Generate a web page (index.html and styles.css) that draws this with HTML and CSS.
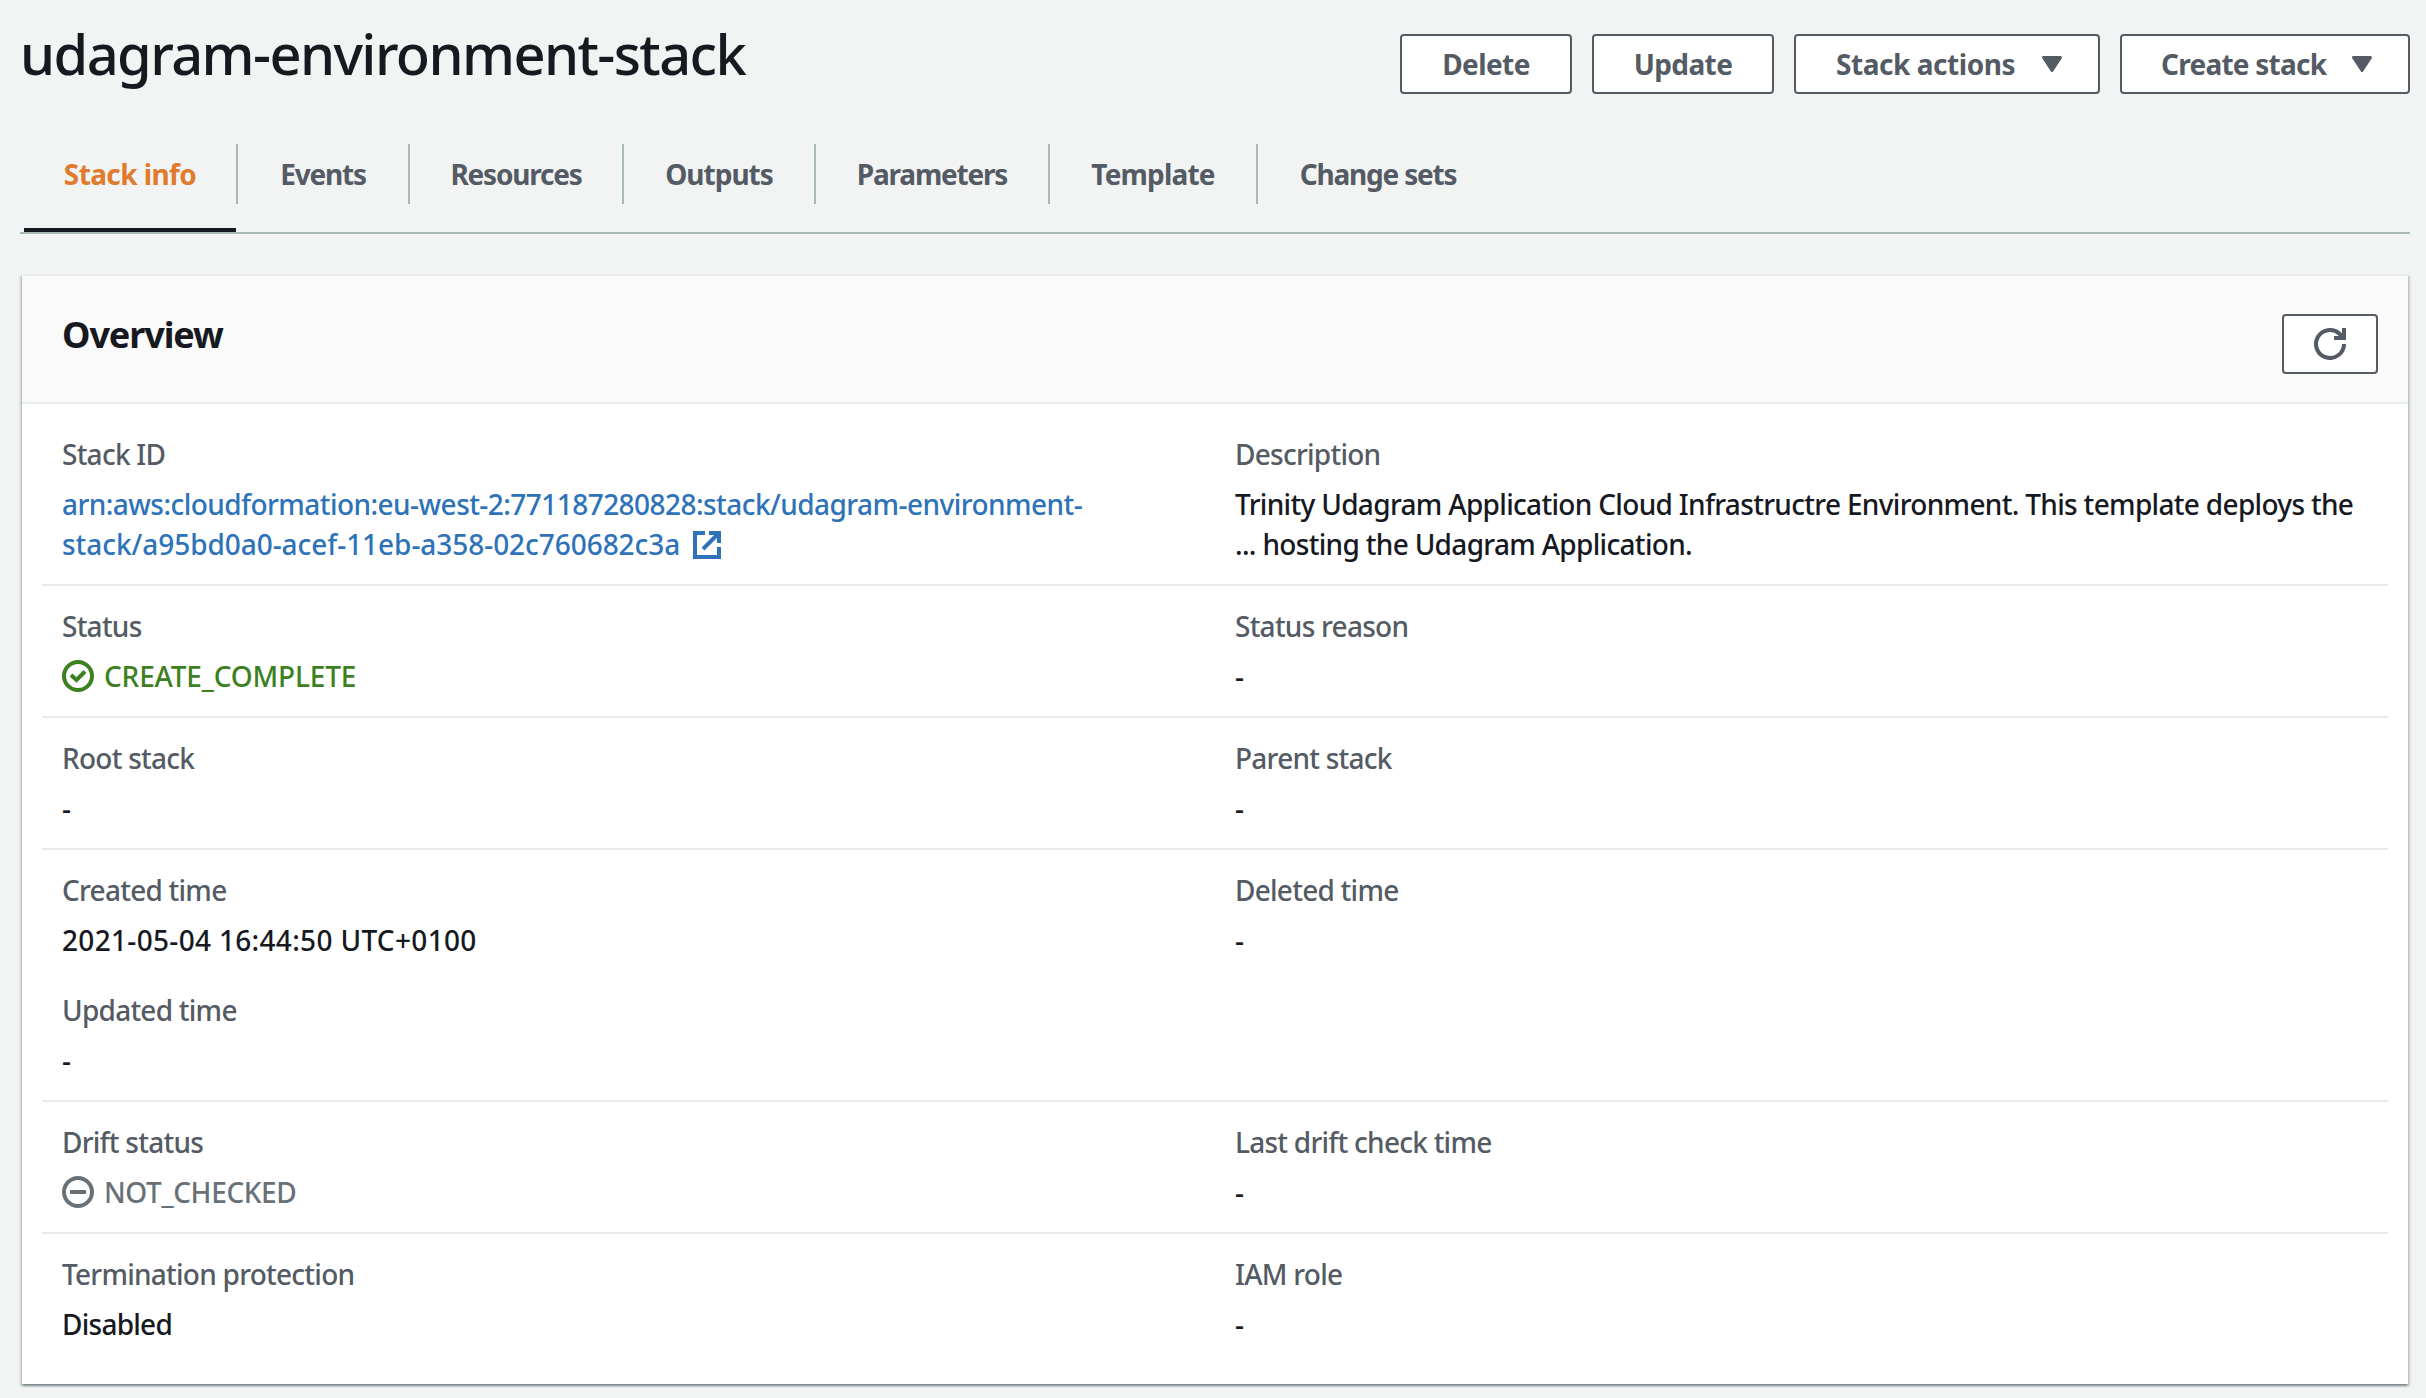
FILE: index.html
```html
<!DOCTYPE html>
<html lang="en">
<head>
<meta charset="utf-8">
<title>udagram-environment-stack</title>
<link rel="stylesheet" href="styles.css">
</head>
<body>
<header class="page-header">
  <h1 class="page-title"><span>udagram-environment-stack</span></h1>
  <div class="actions">
    <button class="button delete"><span>Delete</span></button>
    <button class="button update"><span>Update</span></button>
    <button class="button stack-actions"><span>Stack actions</span><svg class="caret" viewBox="0 0 20 16"><path d="M1.500 1.500h17L10 14.500z"/></svg></button>
    <button class="button create"><span>Create stack</span><svg class="caret" viewBox="0 0 20 16"><path d="M1.500 1.500h17L10 14.500z"/></svg></button>
  </div>
</header>
<nav class="tabs">
  <a class="tab tab-info active"><span>Stack info</span></a>
  <a class="tab tab-events"><span>Events</span></a>
  <a class="tab tab-resources"><span>Resources</span></a>
  <a class="tab tab-outputs"><span>Outputs</span></a>
  <a class="tab tab-parameters"><span>Parameters</span></a>
  <a class="tab tab-template"><span>Template</span></a>
  <a class="tab tab-changes"><span>Change sets</span></a>
</nav>
<main class="card">
  <div class="card-header">
    <h2 class="card-title"><span>Overview</span></h2>
    <button class="button refresh" aria-label="Refresh"><svg class="refresh-icon" viewBox="0 0 32 32"><path d="M30 16A14 14 0 1 1 25.500 5.700L29 10M30 0v10H20"/></svg></button>
  </div>
  <div class="card-body">
    <section class="row">
      <div class="cell"><div class="label"><span>Stack ID</span></div><div class="value"><a class="link"><span class="arn">arn:aws:cloudformation:eu-west-2:771187280828:stack/udagram-environment-</span><br><span class="arn-tail">stack/a95bd0a0-acef-11eb-a358-02c760682c3a</span><svg class="external" viewBox="0 0 28 28"><path d="M12 2H2v24h24V16M16 2h10v10M26 2L10 18"/></svg></a></div></div>
      <div class="cell"><div class="label"><span>Description</span></div><div class="value"><span class="desc">Trinity Udagram Application Cloud Infrastructre Environment. This template deploys the</span><br><span class="desc">... hosting the Udagram Application.</span></div></div>
    </section>
    <section class="row">
      <div class="cell"><div class="label"><span>Status</span></div><div class="value status success"><svg class="status-icon" viewBox="0 0 32 32"><circle cx="16" cy="16" r="14"/><path d="M9 15l5.500 5L23 11.500"/></svg><span>CREATE_COMPLETE</span></div></div>
      <div class="cell"><div class="label"><span>Status reason</span></div><div class="value">-</div></div>
    </section>
    <section class="row">
      <div class="cell"><div class="label"><span>Root stack</span></div><div class="value">-</div></div>
      <div class="cell"><div class="label"><span>Parent stack</span></div><div class="value">-</div></div>
    </section>
    <section class="row">
      <div class="cell"><div class="label"><span>Created time</span></div><div class="value"><span class="timestamp">2021-05-04 16:44:50 UTC+0100</span></div></div>
      <div class="cell"><div class="label"><span>Deleted time</span></div><div class="value">-</div></div>
      <div class="cell"><div class="label"><span>Updated time</span></div><div class="value">-</div></div>
    </section>
    <section class="row">
      <div class="cell"><div class="label"><span>Drift status</span></div><div class="value status neutral"><svg class="status-icon" viewBox="0 0 32 32"><circle cx="16" cy="16" r="14"/><path d="M8 16h16"/></svg><span>NOT_CHECKED</span></div></div>
      <div class="cell"><div class="label"><span>Last drift check time</span></div><div class="value">-</div></div>
    </section>
    <section class="row">
      <div class="cell"><div class="label"><span>Termination protection</span></div><div class="value"><span>Disabled</span></div></div>
      <div class="cell"><div class="label"><span>IAM role</span></div><div class="value">-</div></div>
    </section>
  </div>
</main>
</body>
</html>
```
FILE: styles.css
```css
* { box-sizing: border-box; }
body {
  margin: 0;
  height: 1398px;
  padding: 0 16px 0 20px;
  overflow: hidden;
  background: #f2f4f3;
  color: #16191f;
  font: 500 28px/40px "Noto Sans", sans-serif;
  letter-spacing: -0.75px;
}
h1, h2 { margin: 0; }
.page-header { display: flex; justify-content: space-between; height: 144px; }
.page-title { padding-top: 13px; font-size: 56px; line-height: 80px; font-weight: 500; letter-spacing: -1.6px; }
.actions { display: flex; gap: 20px; padding-top: 34px; }
.button {
  display: flex; align-items: center; justify-content: center;
  height: 60px; padding: 0; border: 2px solid #545b64; border-radius: 4px;
  background: #fff; color: #545b64; font: inherit; font-weight: 700; letter-spacing: -0.6px;
}
.delete { width: 172px; }
.update { width: 182px; }
.stack-actions, .create { justify-content: space-between; padding: 0 36px 0 40px; }
.stack-actions { width: 306px; letter-spacing: -0.45px; }
.create { width: 290px; padding-left: 39px; letter-spacing: -0.75px; }
.caret { width: 20px; height: 16px; fill: #545b64; stroke: #545b64; stroke-width: 3; stroke-linejoin: round; }
.tabs { display: flex; height: 90px; border-bottom: 2px solid #aab7b8; padding-left: 4px; font-weight: 700; color: #545b64; letter-spacing: -1.2px; }
.tab { display: flex; height: 60px; padding-top: 10px; justify-content: center; border-right: 2px solid #aab7b8; }
.tab-info { width: 214px; letter-spacing: -0.6px; }
.tab-events { width: 172px; }
.tab-resources { width: 214px; }
.tab-outputs { width: 192px; letter-spacing: -1px; }
.tab-parameters { width: 234px; }
.tab-template { width: 208px; letter-spacing: -0.8px; }
.tab-changes { width: 240px; border: 0; }
.active { color: #e07b2e; }
.active::after { content: ""; position: absolute; left: 24px; top: 228px; width: 212px; height: 4px; background: #16191f; }
.card { margin: 40px 2px 0; height: 1110px; background: #fff; border-top: 2px solid #eaeded; box-shadow: 0 2px 2px 0 rgba(0,28,36,.3), 2px 2px 2px 0 rgba(0,28,36,.15), -2px 2px 2px 0 rgba(0,28,36,.15); }
.card-header { display: flex; justify-content: space-between; height: 128px; padding: 38px 30px 0 40px; background: #fafafa; border-bottom: 2px solid #eaeded; }
.card-title { margin-top: -1px; font-size: 36px; line-height: 44px; letter-spacing: -1.1px; }
.refresh { width: 96px; }
.refresh-icon { width: 32px; height: 32px; fill: none; stroke: #545b64; stroke-width: 4; }
.card-body { padding: 10px 20px 0; }
.row { display: grid; grid-template-columns: 1fr 1fr; gap: 30px 40px; padding: 20px 20px 20px; border-bottom: 2px solid #eaeaea; }
.row:last-child { border: 0; }
.label { margin-bottom: 10px; color: #545b64; }
.link { color: #2e73b8; }
.arn { letter-spacing: -0.55px; }
.arn-tail { letter-spacing: -0.05px; }
.desc { letter-spacing: -0.68px; }
.timestamp { letter-spacing: 0.32px; }
.external { width: 28px; height: 28px; margin-left: 13px; vertical-align: -4px; fill: none; stroke: currentColor; stroke-width: 4; }
.status { display: flex; align-items: center; gap: 10px; }
.status-icon { width: 32px; height: 32px; fill: none; stroke: currentColor; stroke-width: 4; }
.success { color: #3c8020; letter-spacing: -0.17px; }
.neutral { color: #687078; letter-spacing: -0.38px; }
```
